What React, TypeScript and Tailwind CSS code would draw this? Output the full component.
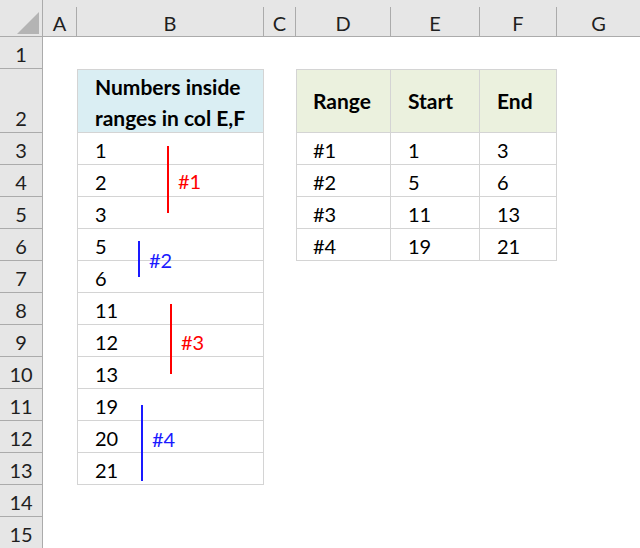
const font = { fontFamily: 'Lato, "Open Sans", sans-serif' };

const cols = [
  { key: 'A', w: 'w-[34px]' },
  { key: 'B', w: 'w-[187px]' },
  { key: 'C', w: 'w-[32px]' },
  { key: 'D', w: 'w-[95px]' },
  { key: 'E', w: 'w-[89px]' },
  { key: 'F', w: 'w-[77px]' },
  { key: 'G', w: 'w-[83px]' },
];

type Row = { n: number; tall?: boolean; b?: string; d?: string; e?: string; f?: string };

const rows: Row[] = [
  { n: 1 },
  { n: 2, tall: true },
  { n: 3, b: '1', d: '#1', e: '1', f: '3' },
  { n: 4, b: '2', d: '#2', e: '5', f: '6' },
  { n: 5, b: '3', d: '#3', e: '11', f: '13' },
  { n: 6, b: '5', d: '#4', e: '19', f: '21' },
  { n: 7, b: '6' },
  { n: 8, b: '11' },
  { n: 9, b: '12' },
  { n: 10, b: '13' },
  { n: 11, b: '19' },
  { n: 12, b: '20' },
  { n: 13, b: '21' },
  { n: 14 },
  { n: 15 },
];

function RowHead({ n, tall }: { n: number; tall?: boolean }) {
  return (
    <div
      className={`w-[43px] shrink-0 flex items-end justify-center bg-[#e6e6e6] border-r border-b border-[#ababab] ${
        tall ? 'h-[64px]' : 'h-[32px]'
      }`}
    >
      <div className="h-[31px] pt-[3px] flex items-center text-[20px] text-[#1f1f1f]">{n}</div>
    </div>
  );
}

function Marker({
  top,
  h,
  left,
  color,
  label,
  shift = 'pt-[2px]',
}: {
  top: string;
  h: string;
  left: string;
  color: string;
  label: string;
  shift?: string;
}) {
  return (
    <div className={`absolute flex items-center gap-[9px] ${top} ${left}`}>
      <div className={`w-[2px] ${h} ${color === 'red' ? 'bg-[#ff0000]' : 'bg-[#1a1aff]'}`} />
      <span className={`text-[20px] ${shift} ${color === 'red' ? 'text-[#ff0000]' : 'text-[#1a1aff]'}`}>{label}</span>
    </div>
  );
}

export default function App() {
  return (
    <div className="relative w-[640px] h-[548px] overflow-hidden bg-white text-black" style={font}>
      {/* column headers */}
      <div className="flex h-[37px] bg-[#e6e6e6] border-b border-[#ababab]">
        <div className="w-[43px] shrink-0 relative border-r border-[#ababab]">
          <div
            className="absolute left-[17px] top-[12px] w-[22px] h-[22px] bg-[#b4b4b4]"
            style={{ clipPath: 'polygon(100% 0, 100% 100%, 0 100%)' }}
          />
        </div>
        {cols.map((c, i) => (
          <div key={c.key} className={`${c.w} shrink-0 flex items-end`}>
            <div
              className={`h-[29px] w-full pt-[3px] flex items-center justify-center text-[20px] text-[#1f1f1f] ${
                i < cols.length - 1 ? 'border-r border-[#ababab]' : ''
              }`}
            >
              {c.key}
            </div>
          </div>
        ))}
      </div>

      {rows.map((r) => {
        const h = r.tall ? 'h-[64px]' : 'h-[32px]';
        const inB = r.n >= 2 && r.n <= 13;
        const inTable = r.n >= 2 && r.n <= 6;
        const head = r.n === 2;
        const bCls = inB
          ? `border-x border-b border-[#d4d4d4] ${head ? 'border-t bg-[#daeef3]' : ''}`
          : '';
        const tCls = (first: boolean) =>
          inTable
            ? `border-b border-r border-[#d4d4d4] ${first ? 'border-l' : ''} ${head ? 'border-t bg-[#ebf1de] font-bold text-[21px]' : 'pt-[3px] text-[20px]'}`
            : '';
        return (
          <div key={r.n} className="flex">
            <RowHead n={r.n} tall={r.tall} />
            <div className={`w-[34px] shrink-0 ${h}`} />
            <div
              className={`w-[187px] shrink-0 ${h} ${bCls} flex items-center pl-[17px] ${
                head ? 'text-[21px]' : 'text-[20px] pt-[3px]'
              }`}
            >
              {head ? (
                <div className="font-bold leading-[31px] pt-[1px]">
                  <div>Numbers inside</div>
                  <div>ranges in col E,F</div>
                </div>
              ) : (
                r.b
              )}
            </div>
            <div className={`w-[32px] shrink-0 ${h}`} />
            <div className={`w-[95px] shrink-0 ${h} ${tCls(true)} flex items-center pl-[16px]`}>
              {head ? 'Range' : r.d}
            </div>
            <div className={`w-[89px] shrink-0 ${h} ${tCls(false)} flex items-center pl-[17px]`}>
              {head ? 'Start' : r.e}
            </div>
            <div className={`w-[77px] shrink-0 ${h} ${tCls(false)} flex items-center pl-[17px]`}>
              {head ? 'End' : r.f}
            </div>
            <div className={`w-[83px] shrink-0 ${h}`} />
          </div>
        );
      })}

      <Marker top="top-[146px]" h="h-[67px]" left="left-[167px]" color="red" label="#1" />
      <Marker top="top-[241px]" h="h-[36px]" left="left-[138px]" color="blue" label="#2" />
      <Marker top="top-[304px]" h="h-[70px]" left="left-[170px]" color="red" label="#3" shift="pt-[6px]" />
      <Marker top="top-[405px]" h="h-[76px]" left="left-[141px]" color="blue" label="#4" shift="pb-[8px]" />
    </div>
  );
}
